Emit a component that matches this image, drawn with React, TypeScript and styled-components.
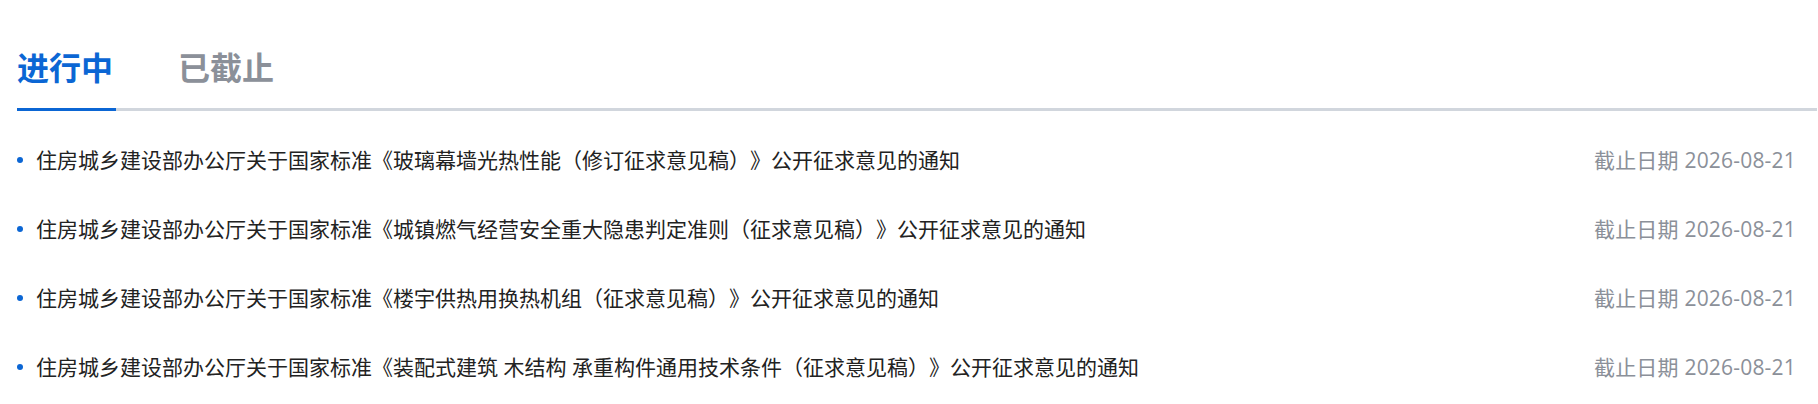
import styled, { createGlobalStyle } from "styled-components";
import { useState } from "react";

const GlobalStyle = createGlobalStyle`
  html, body {
    margin: 0;
    padding: 0;
    background: #ffffff;
  }
  body {
    font-family: "Open Sans", "Noto Sans CJK SC", sans-serif;
    text-spacing-trim: space-all;
  }
`;

const NoticeLayout = styled.div`
  display: flex;
  flex-direction: column;
  padding: 0 1px 0 17px;
`;

const TabBar = styled.div`
  display: flex;
  flex-direction: row;
  gap: 62px;
  padding-top: 48px;
  border-bottom: 3px solid #d1d6dd;
`;

const Tab = styled.button<{ $active: boolean }>`
  margin: 0 0 -3px;
  padding: 0 3px 20px 0;
  border: none;
  border-bottom: 3px solid ${(props) => props.$active ? "#0b66d4" : "transparent"};
  background: transparent;
  font-family: inherit;
  font-size: 32px;
  line-height: 40px;
  font-weight: bold;
  color: ${(props) => props.$active ? "#0b66d4" : "#8b9099"};
  cursor: pointer;
`;

const List = styled.ul`
  list-style: none;
  margin: 0;
  padding: 14px 0 0;
`;

const Row = styled.li`
  display: flex;
  flex-direction: row;
  align-items: center;
  height: 69px;
  padding-right: 21px;
`;

const Dot = styled.span`
  flex: none;
  width: 6px;
  height: 6px;
  border-radius: 50%;
  background: #0b66d4;
  margin-right: 13px;
`;

const Title = styled.a`
  flex: 1;
  font-size: 21px;
  line-height: 30px;
  color: #222222;
  text-decoration: none;
  white-space: nowrap;
  overflow: hidden;
  text-overflow: ellipsis;
`;

const Deadline = styled.span`
  flex: none;
  font-size: 21px;
  line-height: 30px;
  letter-spacing: 0.2px;
  color: #8b9099;
`;

const notices = [
  "住房城乡建设部办公厅关于国家标准《玻璃幕墙光热性能（修订征求意见稿）》公开征求意见的通知",
  "住房城乡建设部办公厅关于国家标准《城镇燃气经营安全重大隐患判定准则（征求意见稿）》公开征求意见的通知",
  "住房城乡建设部办公厅关于国家标准《楼宇供热用换热机组（征求意见稿）》公开征求意见的通知",
  "住房城乡建设部办公厅关于国家标准《装配式建筑 木结构 承重构件通用技术条件（征求意见稿）》公开征求意见的通知",
];

const tabs = ["进行中", "已截止"];

const App = () => {
  const [ active, setActive ] = useState(0);

  return (
    <>
      <GlobalStyle />
      <NoticeLayout>
        <TabBar>
          {tabs.map((name, i) => (
            <Tab key={name} $active={active === i} onClick={() => setActive(i)}>
              {name}
            </Tab>
          ))}
        </TabBar>
        <List>
          {notices.map((title) => (
            <Row key={title}>
              <Dot />
              <Title href="#">{title}</Title>
              <Deadline>截止日期 2026-08-21</Deadline>
            </Row>
          ))}
        </List>
      </NoticeLayout>
    </>
  );
};

export default App;
